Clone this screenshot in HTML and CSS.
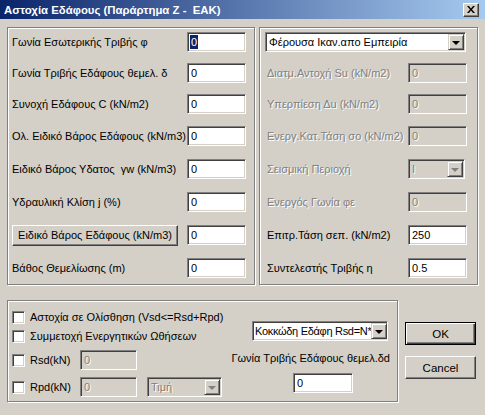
FILE: index.html
```html
<!DOCTYPE html>
<html>
<head>
<meta charset="utf-8">
<link rel="stylesheet" href="styles.css">
</head>
<body>
<div class="win">
  <div class="titlebar">
    <span class="title">Αστοχία Εδάφους (Παράρτημα Ζ -&nbsp; ΕΑΚ)</span>
    <span class="close"><svg width="8" height="7" viewBox="0 0 8 7"><path d="M0 0h2l2 2.5 2-2.5h2l-3 3.5 3 3.5h-2l-2-2.5-2 2.5h-2l3-3.5z" fill="#000"/></svg></span>
  </div>
  <div class="client">
    <div class="top">
      <div class="group g-left">
        <div class="rows">
          <div class="row"><span class="lbl">Γωνία Εσωτερικής Τριβής φ</span><div class="edit"><span class="sel">0</span></div></div>
          <div class="row"><span class="lbl">Γωνία Τριβής Εδάφους θεμελ. δ</span><div class="edit">0</div></div>
          <div class="row"><span class="lbl">Συνοχή Εδάφους C (kN/m2)</span><div class="edit">0</div></div>
          <div class="row"><span class="lbl">Ολ. Ειδικό Βάρος Εδάφους (kN/m3)</span><div class="edit">0</div></div>
          <div class="row"><span class="lbl">Ειδικό Βάρος Υδατος&nbsp; γw (kN/m3)</span><div class="edit">0</div></div>
          <div class="row"><span class="lbl">Υδραυλική Κλίση j (%)</span><div class="edit">0</div></div>
          <div class="row"><span class="lbl-btn"><span class="btn wide">Ειδικό Βάρος Εδάφους (kN/m3)</span></span><div class="edit">0</div></div>
          <div class="row"><span class="lbl">Βάθος Θεμελίωσης (m)</span><div class="edit">0</div></div>
        </div>
      </div>
      <div class="group g-right">
        <div class="rows">
          <div class="row"><div class="combo main-combo"><span class="ctext">Φέρουσα Ικαν.απο Εμπειρία</span><span class="dd"><span class="tri"></span></span></div></div>
          <div class="row"><span class="rlbl dis">Διατμ.Αντοχή Su (kN/m2)</span><div class="edit redit disabled">0</div></div>
          <div class="row"><span class="rlbl dis">Υπερπίεση Δu (kN/m2)</span><div class="edit redit disabled">0</div></div>
          <div class="row"><span class="rlbl dis">Ενεργ.Κατ.Τάση σο (kN/m2)</span><div class="edit redit disabled">0</div></div>
          <div class="row"><span class="rlbl dis">Σεισμική Περιοχή</span><div class="combo seis-combo disabled"><span class="ctext">I</span><span class="dd"><span class="tri"></span></span></div></div>
          <div class="row"><span class="rlbl dis">Ενεργός Γωνία φε</span><div class="edit redit disabled">0</div></div>
          <div class="row"><span class="rlbl">Επιτρ.Τάση σεπ. (kN/m2)</span><div class="edit redit">250</div></div>
          <div class="row"><span class="rlbl">Συντελεστής Τριβής η</span><div class="edit redit">0.5</div></div>
        </div>
      </div>
    </div>
    <div class="bottom">
      <div class="group g-bottom">
        <div class="bcol-left">
          <div class="brow r1"><span class="chk"></span><span class="clbl">Αστοχία σε Ολίσθηση (Vsd&lt;=Rsd+Rpd)</span></div>
          <div class="brow r2"><span class="chk"></span><span class="clbl">Συμμετοχή Ενεργητικών Ωθήσεων</span></div>
          <div class="brow r3"><span class="chk"></span><span class="clbl short">Rsd(kN)</span><div class="edit small disabled">0</div></div>
          <div class="brow r4"><span class="chk"></span><span class="clbl short">Rpd(kN)</span><div class="edit small disabled">0</div><div class="combo val-combo disabled"><span class="ctext">Τιμή</span><span class="dd"><span class="tri"></span></span></div></div>
        </div>
        <div class="bcol-right">
          <div class="combo soil-combo"><span class="ctext">Κοκκώδη Εδάφη Rsd=N*</span><span class="dd"><span class="tri"></span></span></div>
          <div class="dlbl">Γωνία Τριβής Εδάφους θεμελ.δd</div>
          <div class="edit dedit">0</div>
        </div>
      </div>
      <div class="buttons">
        <span class="btn default">OK</span>
        <span class="btn">Cancel</span>
      </div>
    </div>
  </div>
</div>
</body>
</html>
```

FILE: styles.css
```css
html, body {
  margin: 0;
  padding: 0;
}
body {
  width: 485px;
  height: 415px;
  overflow: hidden;
  background: #d4d0c8;
  font-family: "Liberation Sans", Arial, sans-serif;
  font-size: 11px;
  color: #000;
}
.win {
  width: 485px;
  height: 415px;
  background: #d4d0c8;
}
.titlebar {
  height: 19px;
  background: linear-gradient(to right, #0a246a, #a6caf0);
  display: flex;
  align-items: center;
  justify-content: space-between;
  padding: 0 6px 0 4px;
}
.title {
  color: #fff;
  font-weight: bold;
  font-size: 11.4px;
  white-space: nowrap;
}
.close {
  width: 14px;
  height: 12px;
  background: #d4d0c8;
  border: 1px solid;
  border-color: #fff #404040 #404040 #fff;
  box-shadow: inset -1px -1px 0 #808080;
  display: flex;
  align-items: center;
  justify-content: center;
}
.client {
  padding: 8px 7px 0 7px;
}
.top {
  display: flex;
  gap: 4px;
  height: 258px;
}
.group {
  box-sizing: border-box;
  border: 1px solid #808080;
  box-shadow: inset 1px 1px 0 #fff, 1px 1px 0 #fff;
}
.g-left {
  width: 248px;
}
.g-right {
  width: 219px;
}
.rows {
  display: grid;
  grid-template-rows: 31px 31px 32px 33px 33px 33px 33px 20px;
  padding-top: 4px;
}
.g-left .rows {
  padding-left: 4px;
}
.g-right .rows {
  padding-left: 5px;
}
.row {
  display: flex;
  align-items: center;
  height: 20px;
}
.lbl, .lbl-btn {
  width: 175px;
  white-space: nowrap;
  flex: none;
}
.rlbl {
  box-sizing: border-box;
  width: 143px;
  padding-left: 2px;
  white-space: nowrap;
  flex: none;
}
.dis {
  color: #808080;
  text-shadow: 1px 1px 0 #fff;
}
.edit {
  box-sizing: border-box;
  width: 59px;
  height: 20px;
  background: #fff;
  border: 1px solid;
  border-color: #808080 #fff #fff #808080;
  box-shadow: inset 1px 1px 0 #404040, inset -1px -1px 0 #d4d0c8;
  padding: 2px 0 0 3px;
  line-height: 14px;
  white-space: nowrap;
  flex: none;
}
.edit.disabled {
  background: #d4d0c8;
  color: #808080;
  text-shadow: 1px 1px 0 #fff;
}
.sel {
  display: inline-block;
  background: #0a246a;
  color: #fff;
  padding: 0 1px;
  margin-left: -1px;
}
.btn {
  box-sizing: border-box;
  display: flex;
  align-items: center;
  justify-content: center;
  background: #d4d0c8;
  border: 1px solid;
  border-color: #fff #404040 #404040 #fff;
  box-shadow: inset -1px -1px 0 #808080;
  white-space: nowrap;
}
.btn.wide {
  width: 166px;
  height: 21px;
  font-size: 11px;
}
.combo {
  box-sizing: border-box;
  height: 20px;
  background: #fff;
  border: 1px solid;
  border-color: #808080 #fff #fff #808080;
  box-shadow: inset 1px 1px 0 #404040, inset -1px -1px 0 #d4d0c8;
  display: flex;
  align-items: center;
  padding: 1px 1px 1px 3px;
  flex: none;
  overflow: hidden;
}
.combo.disabled {
  background: #d4d0c8;
}
.ctext {
  flex: 1;
  white-space: nowrap;
  overflow: hidden;
}
.combo.disabled .ctext {
  color: #808080;
  text-shadow: 1px 1px 0 #fff;
}
.dd {
  box-sizing: border-box;
  width: 16px;
  height: 16px;
  flex: none;
  background: #d4d0c8;
  border: 1px solid;
  border-color: #d4d0c8 #404040 #404040 #d4d0c8;
  box-shadow: inset 1px 1px 0 #fff, inset -1px -1px 0 #808080;
  display: flex;
  align-items: center;
  justify-content: center;
}
.tri {
  width: 0;
  height: 0;
  border-left: 4px solid transparent;
  border-right: 4px solid transparent;
  border-top: 4px solid #000;
  margin-top: 1px;
}
.combo.disabled .tri {
  border-top-color: #808080;
}
.main-combo {
  width: 201px;
}
.seis-combo {
  width: 57px;
}
.bottom {
  display: flex;
  gap: 7px;
  margin-top: 15px;
}
.g-bottom {
  width: 391px;
  height: 102px;
  display: flex;
}
.bcol-left {
  width: 214px;
  padding: 7px 0 0 4px;
  display: grid;
  grid-template-rows: 19px 23px 27px 20px;
  align-items: start;
}
.brow {
  display: flex;
  align-items: center;
}
.r1, .r2 {
  height: 18px;
}
.r3, .r4 {
  height: 20px;
}
.chk {
  box-sizing: border-box;
  width: 13px;
  height: 13px;
  flex: none;
  background: #fff;
  border: 1px solid;
  border-color: #808080 #fff #fff #808080;
  box-shadow: inset 1px 1px 0 #404040, inset -1px -1px 0 #d4d0c8;
}
.clbl {
  margin-left: 5px;
  white-space: nowrap;
}
.clbl.short {
  width: 50px;
  flex: none;
}
.edit.small {
  width: 57px;
}
.val-combo {
  width: 75px;
  margin-left: 10px;
}
.bcol-right {
  width: 168px;
  padding-top: 20px;
  display: flex;
  flex-direction: column;
}
.soil-combo {
  width: 136px;
  margin-left: 26px;
  padding-left: 2px;
}
.soil-combo .ctext {
  letter-spacing: -0.3px;
  overflow: visible;
}
.dlbl {
  width: 164px;
  text-align: right;
  margin-top: 10px;
  line-height: 14px;
  white-space: nowrap;
}
.dedit {
  width: 60px;
  margin-left: 67px;
  margin-top: 8px;
}
.buttons {
  display: flex;
  flex-direction: column;
  gap: 11px;
  padding-top: 22px;
}
.buttons .btn {
  width: 71px;
  height: 23px;
  font-size: 11.5px;
}
.btn.default {
  border: 1px solid #000;
  box-shadow: inset 1px 1px 0 #fff, inset -1px -1px 0 #404040, inset -2px -2px 0 #808080;
}
```
